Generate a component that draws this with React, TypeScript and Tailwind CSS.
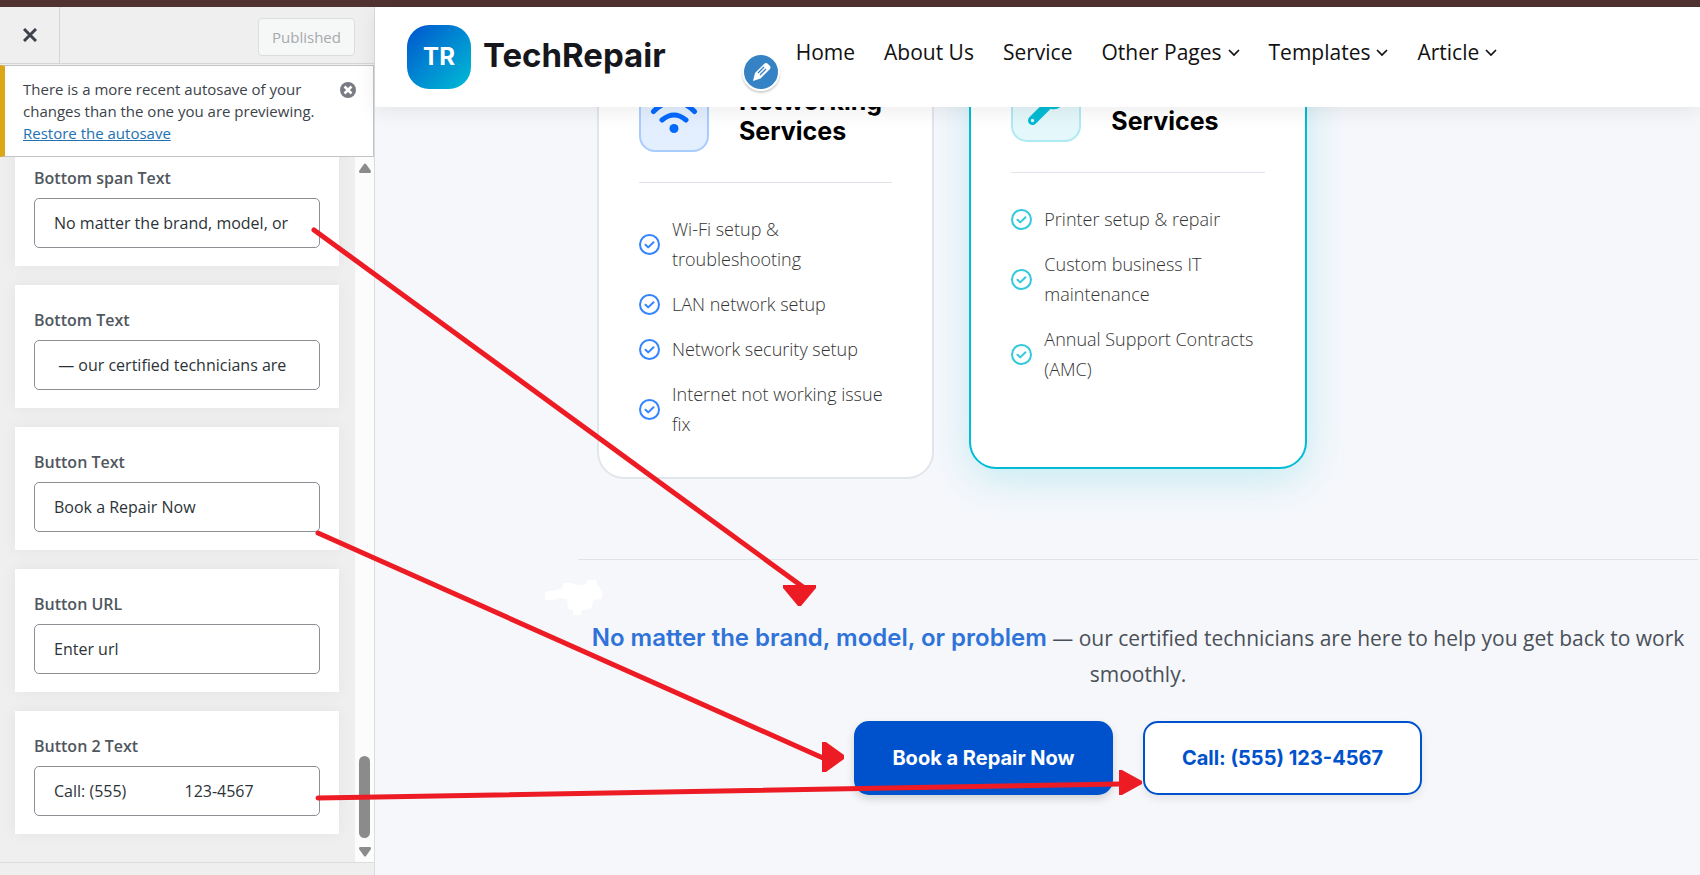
import { FaWrench } from "react-icons/fa";
import clsx from "clsx";

const fields = [
  { id: "bottom-span", label: "Bottom span Text", value: "No matter the brand, model, or" },
  { id: "bottom-text", label: "Bottom Text", value: " — our certified technicians are" },
  { id: "button-text", label: "Button Text", value: "Book a Repair Now" },
  { id: "button-url", label: "Button URL", value: "Enter url" },
  { id: "button-2-text", label: "Button 2 Text", value: "Call: (555)              123-4567" },
];

const navItems = [
  { label: "Home" },
  { label: "About Us" },
  { label: "Service" },
  { label: "Other Pages", menu: true },
  { label: "Templates", menu: true },
  { label: "Article", menu: true },
];

const networking = [
  "Wi-Fi setup & troubleshooting",
  "LAN network setup",
  "Network security setup",
  "Internet not working issue fix",
];

const business = [
  "Printer setup & repair",
  "Custom business IT maintenance",
  "Annual Support Contracts (AMC)",
];

function WifiIcon() {
  return (
    <svg
      viewBox="0 0 48 48"
      className="size-12 shrink-0"
      fill="none"
      stroke="currentColor"
      strokeWidth="5"
      strokeLinecap="round"
    >
      <path d="M3.500 18.500Q24 -2 44.500 18.500" />
      <path d="M12 27Q24 17 36 27" />
      <circle cx="24" cy="35.500" r="4.500" fill="currentColor" stroke="none" />
    </svg>
  );
}

function CheckIcon({ className }: { className: string }) {
  return (
    <svg
      viewBox="0 0 21 21"
      className={clsx("size-[21px] shrink-0", className)}
      fill="none"
      stroke="currentColor"
      strokeWidth="2"
      strokeLinecap="round"
      strokeLinejoin="round"
    >
      <circle cx="10.500" cy="10.500" r="9.500" />
      <path d="M6.500 10.700L9.200 13.400L14.500 8.200" />
    </svg>
  );
}

function Sidebar() {
  return (
    <aside className="flex w-[375px] shrink-0 flex-col border-r border-[#dcdcde] bg-[#efefef]">
      {/* ===== TOP BAR ===== */}
      <div className="flex h-[57px] shrink-0 items-center justify-between border-b border-[#d5d5d8] pr-[19px]">
        <button
          aria-label="Close"
          className="flex h-full w-[60px] items-center justify-center border-r border-[#d5d5d8]"
        >
          <svg viewBox="0 0 14 14" className="size-[14px]" stroke="#3c434a" strokeWidth="3">
            <path d="M1 1l12 12M13 1L1 13" />
          </svg>
        </button>
        <button
          disabled
          className="mt-1 h-[38px] w-[97px] rounded border border-[#dcdcde] bg-[#f6f7f7] text-[15px] text-[#a7aaad]"
        >
          Published
        </button>
      </div>

      {/* ===== AUTOSAVE NOTICE ===== */}
      <div className="mt-px flex shrink-0 justify-between border border-l-[5px] border-[#c3c4c7] border-l-[#dba617] bg-white py-3 pr-[17px] pl-[18px]">
        <p className="text-[15px] leading-[22px] whitespace-nowrap text-[#3c434a]">
          There is a more recent autosave of your
          <br />
          changes than the one you are previewing.
          <br />
          <a href="#restore" className="text-[#2271b1] underline">
            Restore the autosave
          </a>
        </p>
        <button aria-label="Dismiss" className="mt-1 size-4 shrink-0 rounded-full">
          <svg viewBox="0 0 16 16" className="size-4">
            <circle cx="8" cy="8" r="8" fill="#787c82" />
            <path d="M4.500 4.500l7 7M11.500 4.500l-7 7" stroke="#fff" strokeWidth="2.600" />
          </svg>
        </button>
      </div>

      {/* ===== FIELDS ===== */}
      <div className="flex min-h-0 flex-1 overflow-hidden">
        <div className="flex flex-1 flex-col justify-end gap-[19px] pr-4 pb-7 pl-[15px]">
          {fields.map((f) => (
            <div
              key={f.id}
              className="shrink-0 bg-white px-[19px] pt-[23px] pb-[18px] shadow-[0_0_15px_rgba(0,0,0,0.05)]"
            >
              <label
                htmlFor={f.id}
                className="mb-2 block text-base leading-6 font-semibold text-[#50575e]"
              >
                {f.label}
              </label>
              <input
                id={f.id}
                type="text"
                defaultValue={f.value}
                className="h-[50px] w-full rounded-[5px] border border-[#8c8f94] bg-white px-[19px] text-base text-[#2c3338]"
              />
            </div>
          ))}
        </div>
        <div className="flex w-[19px] shrink-0 flex-col items-center justify-between bg-[#fcfcfc] pt-[6px] pb-[5px]">
          <svg viewBox="0 0 12 10" className="h-[10px] w-3" fill="#8b8b8b">
            <path d="M5 1Q6 0 7 1L12 8Q12 10 11 10H1Q0 10 0 8Z" />
          </svg>
          <div className="flex flex-col items-center gap-[9px]">
            <div className="h-[82px] w-[11px] rounded-full bg-[#8b8b8b]" />
            <svg viewBox="0 0 12 10" className="h-[10px] w-3" fill="#8b8b8b">
              <path d="M5 9Q6 10 7 9L12 2Q12 0 11 0H1Q0 0 0 2Z" />
            </svg>
          </div>
        </div>
      </div>
      <div className="h-[13px] shrink-0 border-t border-[#dcdcde]" />
    </aside>
  );
}

function ServiceCard({
  icon,
  title,
  items,
  active,
}: {
  icon: React.ReactNode;
  title: string;
  items: string[];
  active?: boolean;
}) {
  return (
    <article
      className={clsx(
        "flex-1 rounded-[27px] border-2 bg-white p-10 pb-[38px]",
        active
          ? "-translate-y-[10px] border-[#00bcd4] shadow-[0_10px_40px_rgba(0,188,212,0.2)]"
          : "border-[#e2e5ea]"
      )}
    >
      <div className="flex items-end gap-[30px] border-b border-[#e0e2ea] pb-[30px]">
        <div
          className={clsx(
            "flex size-[70px] shrink-0 items-center justify-center rounded-2xl border-2",
            active
              ? "border-[#aeeaf1] bg-[#e4f7fa] text-[#00bcd4]"
              : "border-[#a9ccff] bg-[#e3efff] text-[#0068ff]"
          )}
        >
          {icon}
        </div>
        <h3 className="pb-[6px] text-[25px] leading-[30px] font-bold text-black">{title}</h3>
      </div>
      <ul className="mt-[31px] flex flex-col gap-[15px] font-['Open_Sans',sans-serif] text-lg leading-[30px] font-light text-[#333]">
        {items.map((item) => (
          <li key={item} className="flex items-center gap-3">
            <CheckIcon className={active ? "text-[#33c9dd]" : "text-[#3385ff]"} />
            {item}
          </li>
        ))}
      </ul>
    </article>
  );
}

function Preview() {
  return (
    <main className="flex min-w-0 flex-1 flex-col bg-[#f5f7fb]">
      {/* ===== SITE HEADER ===== */}
      <header className="relative z-10 flex h-[100px] shrink-0 items-center bg-white pl-8 shadow-[0_4px_20px_rgba(0,0,0,0.08)]">
        <a href="#home" className="flex items-center gap-3 font-['Inter',sans-serif]">
          <span className="flex size-16 items-center justify-center rounded-[22px] bg-linear-to-br from-[#0052cc] to-[#00bcd4] text-2xl font-bold text-white">
            TR
          </span>
          <span className="pb-1 text-[33px] leading-10 font-bold text-[#15171c]">TechRepair</span>
        </a>
        <button
          aria-label="Edit menu"
          className="mt-[30px] ml-[76px] flex size-[38px] shrink-0 items-center justify-center rounded-full border-2 border-white bg-[#3582c4] shadow-[0_2px_2px_rgba(60,67,74,0.25)]"
        >
          <svg viewBox="0 0 20 20" className="size-5">
            <path d="M2 19l2-8 9-9q2-2 4 0l1.500 1.500q2 2 0 4l-9 9z" fill="#fff" />
            <path d="M7 11l6-6M9 13l6-6" stroke="#3582c4" strokeWidth="1.300" />
          </svg>
        </button>
        <nav className="ml-4 flex items-center gap-[29px] pb-2 text-[21px] whitespace-nowrap text-[#111]">
          {navItems.map((item) => (
            <a key={item.label} href="#menu" className="flex items-center gap-[6px]">
              {item.label}
              {item.menu && (
                <svg
                  viewBox="0 0 12 8"
                  className="h-2 w-3"
                  fill="none"
                  stroke="#111"
                  strokeWidth="1.700"
                >
                  <path d="M1 1l5 5 5-5" />
                </svg>
              )}
            </a>
          ))}
        </nav>
      </header>

      <div className="flex min-h-0 flex-1 flex-col justify-end overflow-hidden pr-[2px] pb-20 pl-[203px]">
        {/* ===== SERVICES ===== */}
        <section className="grid shrink-0 grid-cols-3 gap-[35px] px-[19px] font-['Inter',sans-serif]">
          <ServiceCard icon={<WifiIcon />} title="Networking Services" items={networking} />
          <ServiceCard
            icon={<FaWrench className="size-9" />}
            title="Services"
            items={business}
            active
          />
        </section>

        {/* ===== CALL TO ACTION ===== */}
        <section className="mt-20 shrink-0 border-t border-[#e0e3e8] pt-[60px] text-center">
          <p className="text-[21px] leading-9 text-[#4a5058]">
            <span className="font-['Inter',sans-serif] text-2xl leading-9 font-semibold text-[#2f73d9]">
              No matter the brand, model, or problem
            </span>{" "}
            — our certified technicians are here to help you get back to work smoothly.
          </p>
          <div className="mt-[29px] flex justify-center gap-[30px] font-['Inter',sans-serif] text-xl font-bold">
            <a
              href="#book"
              className="flex h-[74px] w-[259px] items-center justify-center rounded-[15px] bg-[#0052cc] text-white shadow-[0_4px_8px_rgba(0,0,0,0.15)]"
            >
              Book a Repair Now
            </a>
            <a
              href="#call"
              className="flex h-[74px] w-[279px] items-center justify-center rounded-[15px] border-2 border-[#0052cc] bg-white text-[#0052cc] shadow-[0_4px_8px_rgba(0,0,0,0.08)]"
            >
              Call: (555) 123-4567
            </a>
          </div>
        </section>
      </div>
    </main>
  );
}

// hand drawn arrows linking each field to where it shows up on the page
function Annotations() {
  return (
    <svg
      viewBox="0 0 1700 875"
      className="pointer-events-none absolute top-0 left-0 z-20 h-[875px] w-[1700px]"
      fill="#ed1c24"
    >
      <path
        d="M545 592V600H553L559 598L567 599L568 609L573 610V615H581V611L592 608L593 600L602 599V591L597 584L596 580H587V584L577 585L572 583H563V588L556 590Z"
        fill="#fff"
      />
      <g stroke="#ed1c24" strokeWidth="5" strokeLinecap="round">
        <path d="M314 230L803 587" />
        <path d="M318 533L823 758" />
        <path d="M318 798L1120 784" />
      </g>
      <path d="M783 585H816V588L801 606H798L783 588Z" />
      <path d="M822 742H826L844 755V759L826 772H822Z" />
      <path d="M1119 770H1122L1142 781V784L1122 795H1119Z" />
    </svg>
  );
}

export default function App() {
  return (
    <div className="relative flex h-screen flex-col overflow-hidden font-['Open_Sans',sans-serif]">
      <div className="h-[7px] shrink-0 bg-[#503230]" />
      <div className="flex min-h-0 flex-1">
        <Sidebar />
        <Preview />
      </div>
      <Annotations />
    </div>
  );
}
